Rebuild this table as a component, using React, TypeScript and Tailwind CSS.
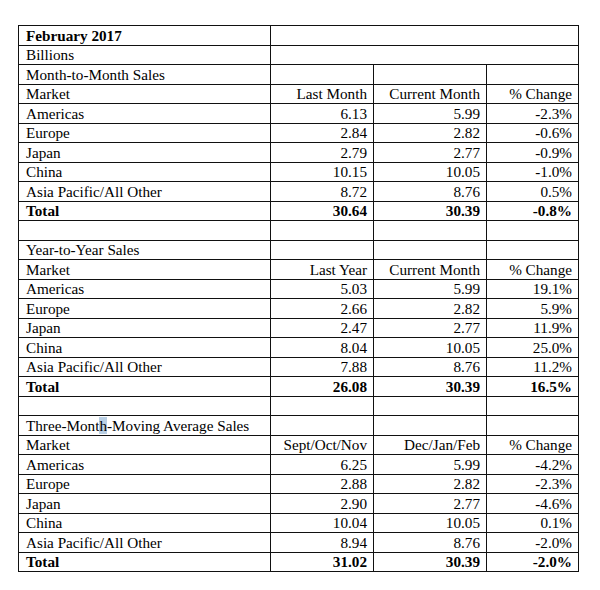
import { FC, Fragment, ReactNode } from "react";

type Row = [string, string, string, string];

interface Section {
  title: ReactNode;
  head: Row;
  rows: Row[];
  total: Row;
}

const sections: Section[] = [
  {
    title: "Month-to-Month Sales",
    head: ["Market", "Last Month", "Current Month", "% Change"],
    rows: [
      ["Americas", "6.13", "5.99", "-2.3%"],
      ["Europe", "2.84", "2.82", "-0.6%"],
      ["Japan", "2.79", "2.77", "-0.9%"],
      ["China", "10.15", "10.05", "-1.0%"],
      ["Asia Pacific/All Other", "8.72", "8.76", "0.5%"],
    ],
    total: ["Total", "30.64", "30.39", "-0.8%"],
  },
  {
    title: "Year-to-Year Sales",
    head: ["Market", "Last Year", "Current Month", "% Change"],
    rows: [
      ["Americas", "5.03", "5.99", "19.1%"],
      ["Europe", "2.66", "2.82", "5.9%"],
      ["Japan", "2.47", "2.77", "11.9%"],
      ["China", "8.04", "10.05", "25.0%"],
      ["Asia Pacific/All Other", "7.88", "8.76", "11.2%"],
    ],
    total: ["Total", "26.08", "30.39", "16.5%"],
  },
  {
    title: (
      <>
        Three-Mont<span className="bg-[#b9cfe4]">h</span>-Moving Average Sales
      </>
    ),
    head: ["Market", "Sept/Oct/Nov", "Dec/Jan/Feb", "% Change"],
    rows: [
      ["Americas", "6.25", "5.99", "-4.2%"],
      ["Europe", "2.88", "2.82", "-2.3%"],
      ["Japan", "2.90", "2.77", "-4.6%"],
      ["China", "10.04", "10.05", "0.1%"],
      ["Asia Pacific/All Other", "8.94", "8.76", "-2.0%"],
    ],
    total: ["Total", "31.02", "30.39", "-2.0%"],
  },
];

const cell = "border border-[#111] h-[19.5px] p-0 leading-[17px] align-middle";

const DataRow: FC<{ row: Row; bold?: boolean }> = ({ row, bold }) => (
  <tr className={bold ? "font-bold" : ""}>
    <td className={`${cell} pl-[7px] text-left`}>{row[0]}</td>
    <td className={`${cell} pr-[6px] text-right`}>{row[1]}</td>
    <td className={`${cell} pr-[6px] text-right`}>{row[2]}</td>
    <td className={`${cell} pr-[6px] text-right`}>{row[3]}</td>
  </tr>
);

const TitleRow: FC<{ title: ReactNode }> = ({ title }) => (
  <tr>
    <td className={`${cell} pl-[7px] text-left`}>{title}</td>
    <td className={cell}></td>
    <td className={cell}></td>
    <td className={cell}></td>
  </tr>
);

export default function App() {
  return (
    <div className="w-[600px] h-[590px] bg-white pt-[25px] pl-[18px] font-['Liberation_Serif',serif] text-[15.2px] text-black">
      <table className="table-fixed border-collapse w-[560px]">
        <colgroup>
          <col className="w-[252px]" />
          <col className="w-[103px]" />
          <col className="w-[113px]" />
          <col className="w-[92px]" />
        </colgroup>
        <tbody>
          <tr>
            <td className={`${cell} pl-[7px] font-bold`}>February 2017</td>
            <td className={cell} colSpan={3}></td>
          </tr>
          <tr>
            <td className={`${cell} pl-[7px]`}>Billions</td>
            <td className={cell} colSpan={3}></td>
          </tr>
          {sections.map((s, i) => (
            <Fragment key={i}>
              {i > 0 && <TitleRow title="" />}
              <TitleRow title={s.title} />
              <DataRow row={s.head} />
              {s.rows.map((r) => (
                <DataRow key={r[0]} row={r} />
              ))}
              <DataRow row={s.total} bold />
            </Fragment>
          ))}
        </tbody>
      </table>
    </div>
  );
}
